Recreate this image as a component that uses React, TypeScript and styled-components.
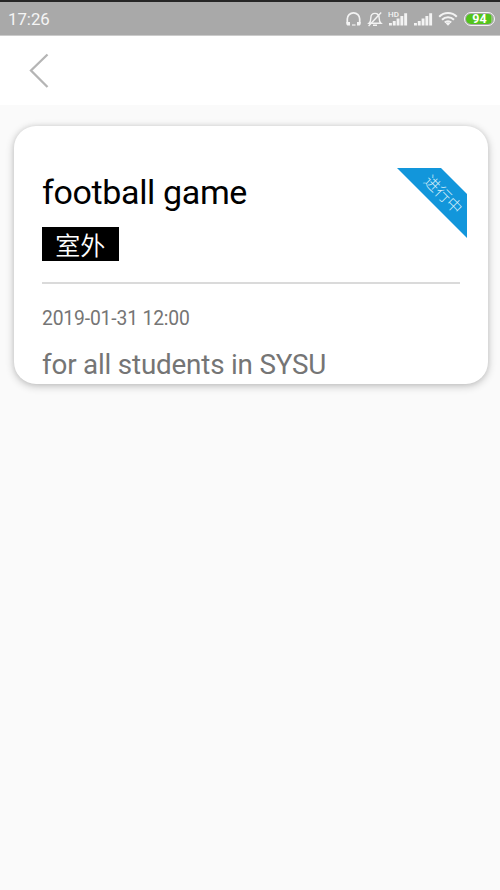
import React from 'react';
import styled, { createGlobalStyle } from 'styled-components';

const GlobalStyle = createGlobalStyle`
  body {
    margin: 0;
    background: #fafafa;
    font-family: Roboto, 'Noto Sans CJK SC', sans-serif;
  }
`;

const Screen = styled.div`
  display: flex;
  flex-direction: column;
  height: 890px;
  overflow: hidden;
  background: #fafafa;
`;

const StatusBar = styled.header`
  display: flex;
  align-items: center;
  justify-content: space-between;
  box-sizing: border-box;
  height: 36px;
  padding: 0 5px 0 8px;
  border-top: 2px solid #262626;
  border-bottom: 1px solid #cbcbcb;
  background: #a9a9a9;
`;

const Clock = styled.time`
  padding-top: 1px;
  color: #f5f5f5;
  font-size: 16.8px;
  line-height: 20px;
`;

const StatusIcons = styled.div`
  display: flex;
  align-items: center;
  color: #f3f3f3;

  svg {
    display: block;
  }
`;

const Battery = styled.div`
  box-sizing: border-box;
  width: 31px;
  height: 14px;
  margin-left: 6px;
  padding: 1px;
  border: 1px solid #f6f6f6;
  border-radius: 7px;
`;

const BatteryLevel = styled.div`
  height: 10px;
  border-radius: 6px;
  background: linear-gradient(90deg, #52c41c 0 94%, #8cc370 94%);
  color: #fff;
  font-size: 12.5px;
  font-weight: 700;
  line-height: 10px;
  text-align: center;
`;

const NavBar = styled.nav`
  display: flex;
  align-items: center;
  height: 69px;
  padding-left: 28px;
  background: #fff;
`;

const BackButton = styled.button`
  display: flex;
  padding: 0;
  border: 0;
  background: none;
`;

const Card = styled.article`
  box-sizing: border-box;
  height: 258px;
  margin: 21px 12px 0 14px;
  padding: 42px 21px 0 28px;
  overflow: hidden;
  border-radius: 22px;
  background: #fff;
  box-shadow: 0 2px 8px rgba(0, 0, 0, 0.24), 0 0 5px rgba(0, 0, 0, 0.07);
`;

const CardHeader = styled.div`
  display: flex;
  justify-content: space-between;
  height: 114px;
`;

const Title = styled.h1`
  margin: 4px 0 14px;
  color: #000;
  font-size: 34px;
  font-weight: 400;
  letter-spacing: -0.36px;
  line-height: 41px;
`;

const Tag = styled.span`
  display: flex;
  align-items: center;
  justify-content: center;
  width: 76.5px;
  height: 34px;
  background: #000;
  color: #fff;
  font-family: 'Noto Sans CJK SC', sans-serif;
  font-size: 25px;
  font-weight: 350;
  line-height: 34px;
`;

const Ribbon = styled.div`
  display: flex;
  align-items: center;
  justify-content: center;
  width: 70px;
  height: 70px;
  background: #1296db;
  clip-path: polygon(0 0, 44px 0, 70px 26px, 70px 70px);
`;

const RibbonText = styled.span`
  transform: translate(12px, -9.5px) rotate(45deg);
  color: #d5edf9;
  font-family: 'Noto Sans CJK SC', sans-serif;
  font-size: 15.5px;
  font-weight: 300;
  line-height: 18px;
  white-space: nowrap;
`;

const Details = styled.div`
  margin-right: 7px;
  border-top: 2px solid #dadada;
  color: #757575;
`;

const DateLine = styled.div`
  margin-top: 23px;
  font-size: 19.3px;
  letter-spacing: -0.15px;
  line-height: 24px;
`;

const Description = styled.p`
  margin: 18px 0 0;
  font-size: 27.8px;
  letter-spacing: -0.19px;
  line-height: 32px;
`;

const HeadphonesIcon = () => (
  <svg width="18" height="16" viewBox="0 0 18 16" fill="none" stroke="currentColor" strokeWidth="1.7">
    <path d="M2.300 12.500V8a6.200 6.200 0 0 1 12.400 0v4.500" />
    <path d="M1.400 11h3.600v3.500H3c-1 0-1.600-.7-1.600-1.500ZM12 11h3.600v2c0 .8-.6 1.500-1.600 1.500h-2Z" fill="currentColor" stroke="none" />
    <path d="M7 14h3.500" strokeWidth="1.200" />
  </svg>
);

const MutedBellIcon = () => (
  <svg width="16" height="16" viewBox="0 0 16 16" fill="none" stroke="currentColor" strokeWidth="1.400">
    <path d="M2 12.200h12c-1.500-1.300-1.800-2.300-1.800-5 0-3-1.700-4.800-4.200-4.800s-4.200 1.800-4.200 4.800c0 2.700-.3 3.700-1.800 5Z" />
    <path d="M6 14.200h4M14.200 1.500 1.600 15" />
  </svg>
);

const SignalIcon = ({ hd = false }: { hd?: boolean }) => (
  <svg width="20" height="16" viewBox="0 0 20 16" fill="currentColor">
    <path d="M1 12h2.900v2.500h-2.900zM4.800 10h2.900v4.500h-2.900zM8.600 7.500h2.900v7h-2.900zM12.400 5h2.900v9.500h-2.900zM16.200 2.300h2.900v12.200h-2.900z" />
    {hd && (
      <text x="0" y="6.200" fontFamily="Roboto, sans-serif" fontSize="8" fontWeight="500">
        HD
      </text>
    )}
  </svg>
);

const WifiIcon = () => (
  <svg width="20" height="16" viewBox="0 0 20 16" fill="none" stroke="currentColor" strokeWidth="2">
    <path d="M1.200 5.700a12.500 12.500 0 0 1 17.600 0M4 8.700a8.500 8.500 0 0 1 12 0M6.800 11.500a4.500 4.500 0 0 1 6.400 0" />
    <path d="m7.800 12.500 2.200 2.200 2.200-2.200a3 3 0 0 0-4.400 0Z" fill="currentColor" stroke="none" />
  </svg>
);

const IconSlot = styled.span<{ $gap?: number }>`
  margin-left: ${({ $gap = 0 }) => $gap}px;
`;

export default function App() {
  return (
    <>
      <GlobalStyle />
      <Screen>
        <StatusBar>
          <Clock>17:26</Clock>
          <StatusIcons>
            <IconSlot><HeadphonesIcon /></IconSlot>
            <IconSlot $gap={4}><MutedBellIcon /></IconSlot>
            <IconSlot $gap={5}><SignalIcon hd /></IconSlot>
            <IconSlot $gap={5}><SignalIcon /></IconSlot>
            <IconSlot $gap={5}><WifiIcon /></IconSlot>
            <Battery>
              <BatteryLevel>94</BatteryLevel>
            </Battery>
          </StatusIcons>
        </StatusBar>
        <NavBar>
          <BackButton aria-label="Back">
            <svg width="22" height="36" viewBox="0 0 22 36" fill="none" stroke="#b5b5b5" strokeWidth="2.300">
              <path d="M19.500 1.500 3 17.500l16.500 16.500" />
            </svg>
          </BackButton>
        </NavBar>
        <Card>
          <CardHeader>
            <div>
              <Title>football game</Title>
              <Tag>室外</Tag>
            </div>
            <Ribbon>
              <RibbonText>进行中</RibbonText>
            </Ribbon>
          </CardHeader>
          <Details>
            <DateLine>2019-01-31 12:00</DateLine>
            <Description>for all students in SYSU</Description>
          </Details>
        </Card>
      </Screen>
    </>
  );
}
